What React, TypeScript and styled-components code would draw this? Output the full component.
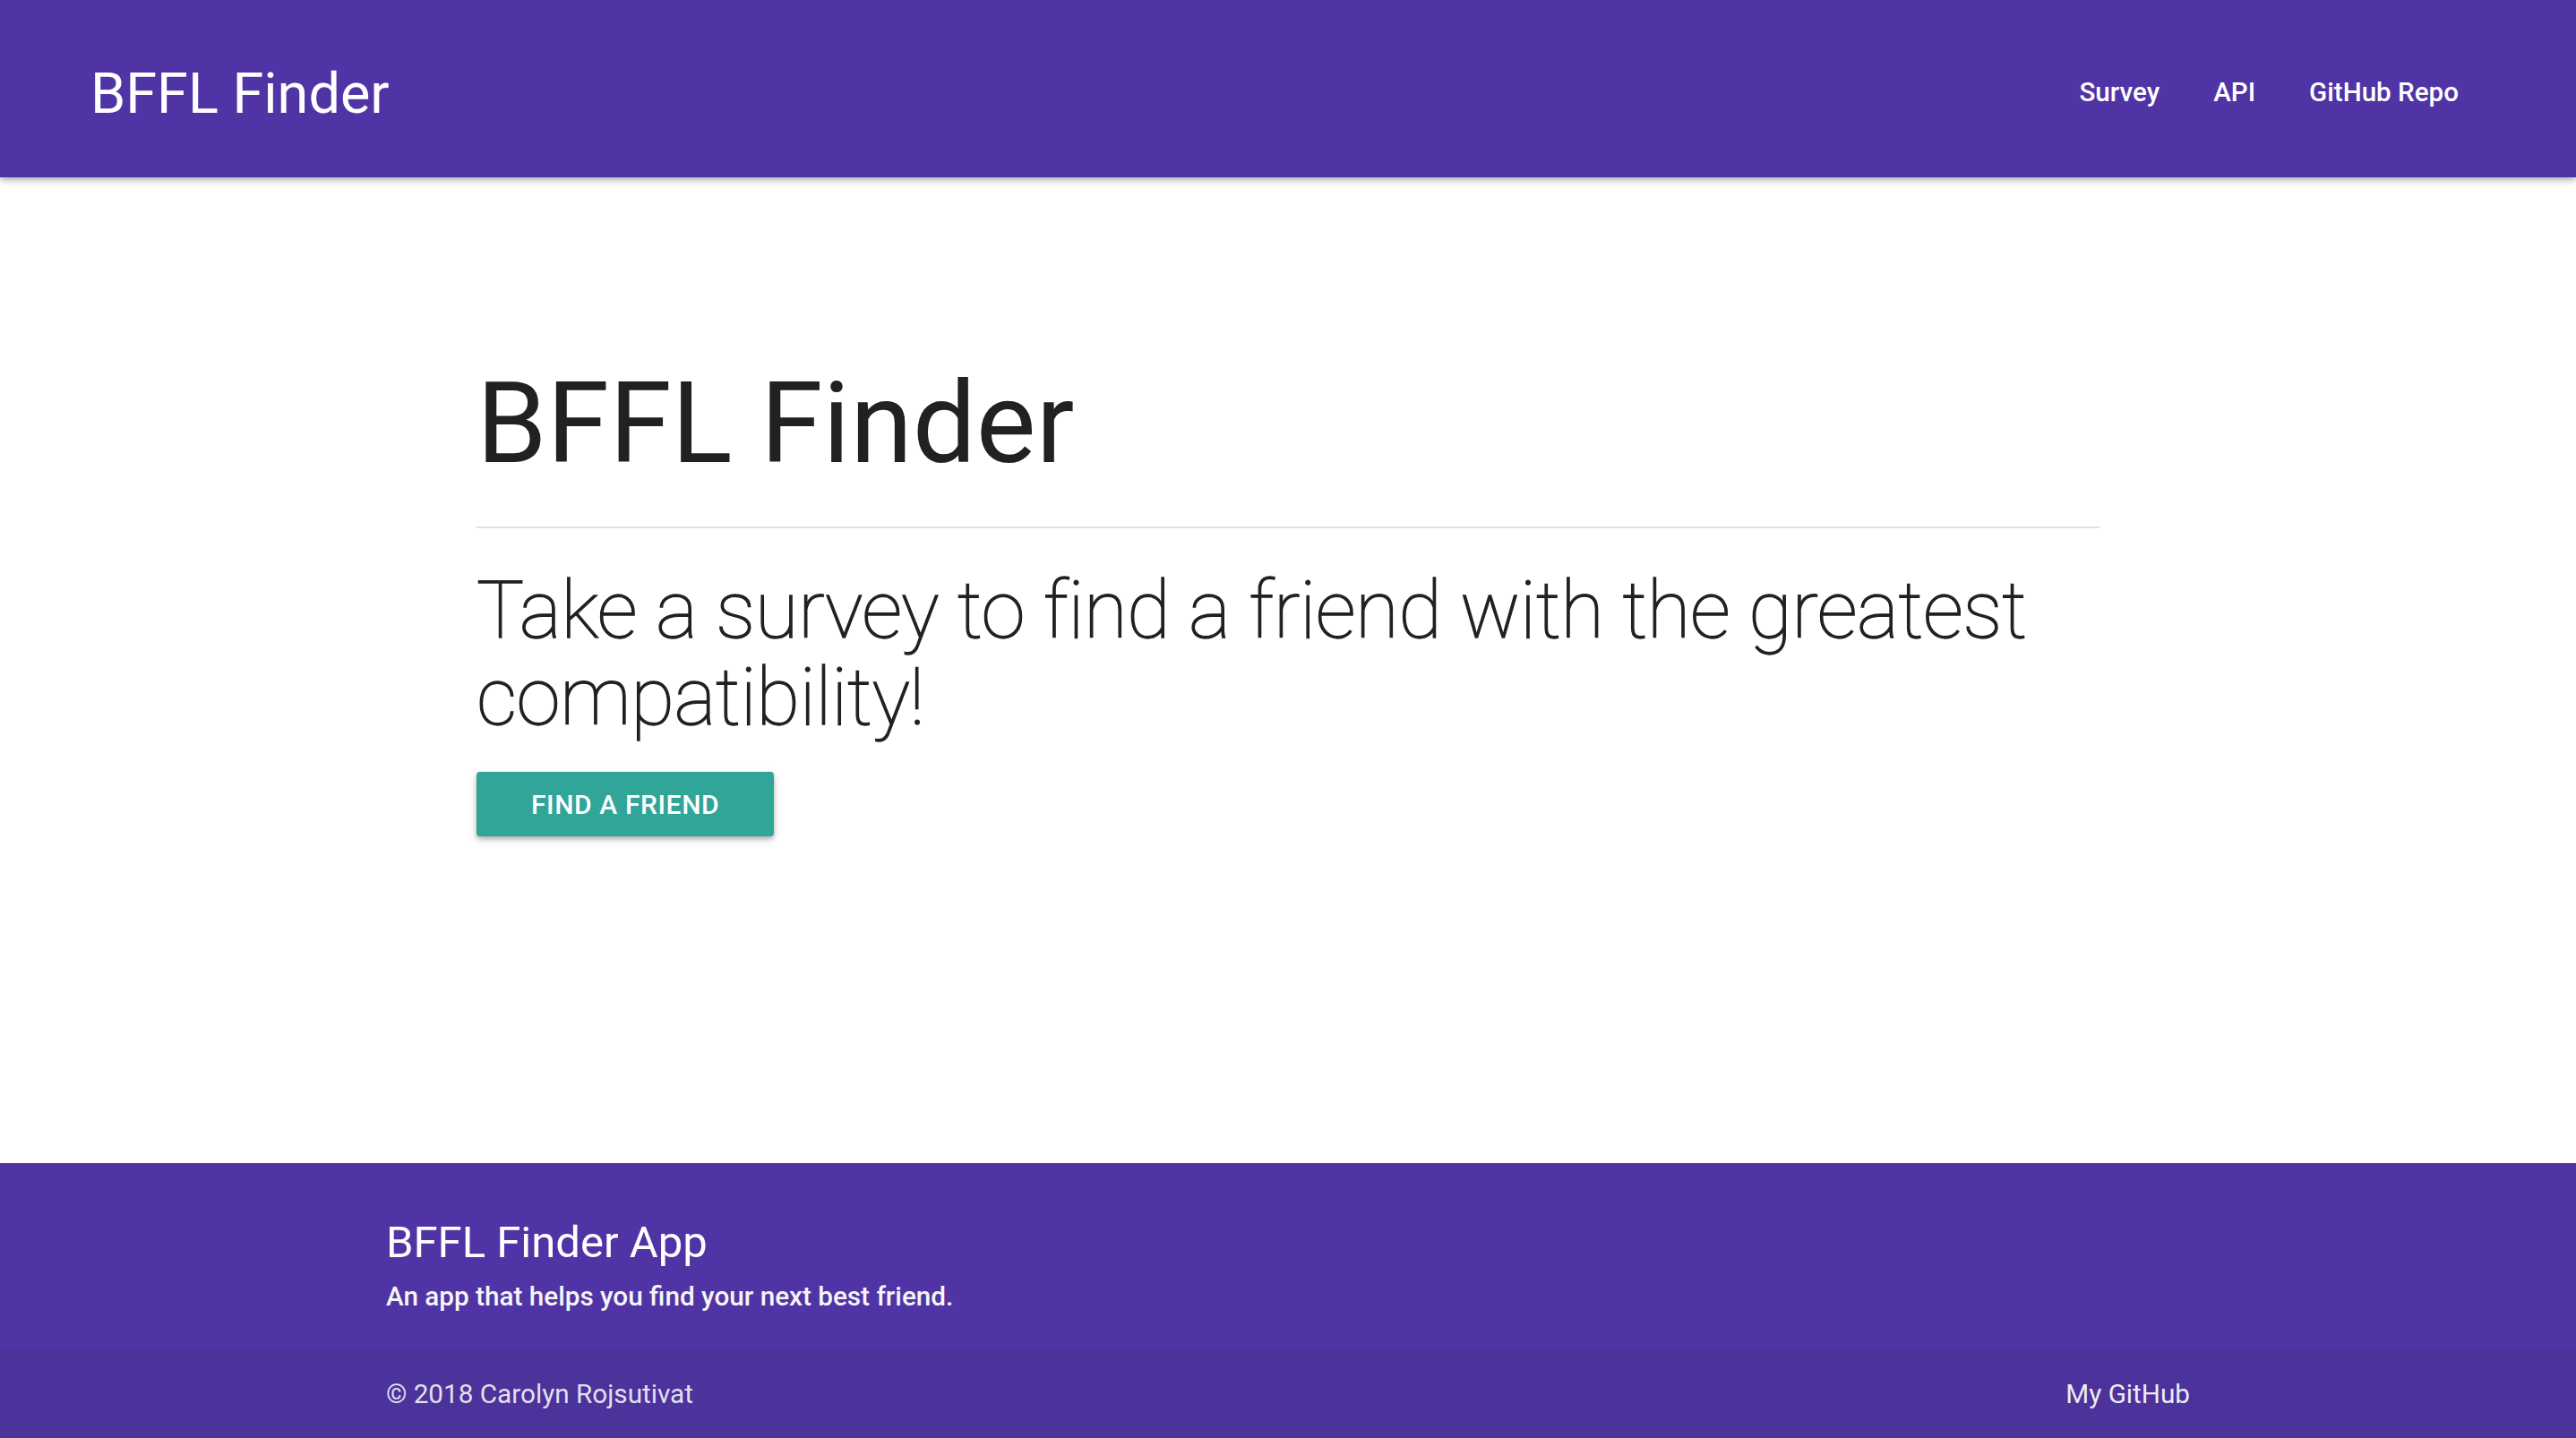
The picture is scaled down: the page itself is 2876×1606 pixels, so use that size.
import React from "react";
import styled, { createGlobalStyle } from "styled-components";

const GlobalStyle = createGlobalStyle`
  html, body {
    margin: 0;
    padding: 0;
    background: #ffffff;
  }
  body {
    font-family: Roboto, "Liberation Sans", Arial, sans-serif;
    color: rgba(0, 0, 0, 0.87);
  }
  * { box-sizing: border-box; }
`;

const Page = styled.div`
  min-height: 100vh;
  display: flex;
  flex-direction: column;
`;

const NavBar = styled.nav`
  height: 198px;
  background: #5034a5;
  box-shadow: 0 4px 8px rgba(0, 0, 0, 0.22), 0 2px 4px rgba(0, 0, 0, 0.14);
  display: flex;
  align-items: center;
  justify-content: space-between;
  padding: 10px 101px 0;
  position: relative;
  z-index: 2;
`;

const Brand = styled.a`
  color: #ffffff;
  font-size: 63px;
  font-weight: 400;
  text-decoration: none;
  line-height: 1;
`;

const NavList = styled.ul`
  list-style: none;
  margin: 0;
  padding: 0;
  display: flex;
  align-items: center;
`;

const NavItem = styled.li`
  display: block;
`;

const NavLink = styled.a`
  display: block;
  color: #ffffff;
  font-size: 29.6px;
  font-weight: 500;
  padding: 0 30px;
  text-decoration: none;
  line-height: 1.2;
`;

const Main = styled.main`
  flex: 1;
  display: flex;
  justify-content: center;
`;

const Jumbotron = styled.section`
  width: 1812px;
  padding-top: 206px;
  display: flex;
  flex-direction: column;
  align-items: flex-start;
`;

const Title = styled.h1`
  margin: 0;
  font-size: 126px;
  font-weight: 400;
  line-height: 1.1;
  color: #212121;
`;

const Divider = styled.hr`
  align-self: stretch;
  border: none;
  height: 2px;
  background: #e0e0e0;
  margin: 45px 0 43px;
`;

const Lead = styled.p`
  margin: 0;
  font-size: 89px;
  font-weight: 100;
  line-height: 1.1;
  letter-spacing: -0.55px;
  color: #212121;
  -webkit-text-stroke: 1.3px #212121;
`;

const ActionButton = styled.a`
  margin-top: 34px;
  height: 72px;
  padding: 0 61px;
  display: inline-flex;
  align-items: center;
  background: #30a598;
  color: #ffffff;
  font-size: 30px;
  font-weight: 500;
  letter-spacing: 0.6px;
  text-transform: uppercase;
  text-decoration: none;
  border-radius: 4px;
  box-shadow: 0 4px 10px rgba(0, 0, 0, 0.16), 0 3px 4px rgba(0, 0, 0, 0.2);
`;

const Footer = styled.footer`
  background: #5034a5;
  color: #ffffff;
`;

const FooterContainer = styled.div`
  width: 2014px;
  margin: 0 auto;
`;

const FooterTop = styled(FooterContainer)`
  padding: 62px 0 36px;
`;

const FooterTitle = styled.h5`
  margin: 0 0 12px;
  font-size: 49px;
  font-weight: 400;
  line-height: 1.1;
  color: #ffffff;
`;

const FooterText = styled.p`
  margin: 0;
  font-size: 29.7px;
  font-weight: 500;
  line-height: 1.5;
  color: #f5f5f5;
`;

const CopyrightBar = styled.div`
  background: #4c339b;
  height: 99px;
`;

const CopyrightRow = styled(FooterContainer)`
  height: 100%;
  display: flex;
  align-items: center;
  justify-content: space-between;
  font-size: 29.7px;
  font-weight: 400;
  color: rgba(255, 255, 255, 0.85);
`;

const FooterLink = styled.a`
  color: rgba(255, 255, 255, 0.92);
  text-decoration: none;
  white-space: nowrap;
`;

export default function App() {
  return (
    <Page>
      <GlobalStyle />
      <NavBar>
        <Brand href="#">BFFL Finder</Brand>
        <NavList>
          <NavItem>
            <NavLink href="#">Survey</NavLink>
          </NavItem>
          <NavItem>
            <NavLink href="#">API</NavLink>
          </NavItem>
          <NavItem>
            <NavLink href="#">GitHub Repo</NavLink>
          </NavItem>
        </NavList>
      </NavBar>
      <Main>
        <Jumbotron>
          <Title>BFFL Finder</Title>
          <Divider />
          <Lead>Take a survey to find a friend with the greatest compatibility!</Lead>
          <ActionButton href="#">Find a Friend</ActionButton>
        </Jumbotron>
      </Main>
      <Footer>
        <FooterTop>
          <FooterTitle>BFFL Finder App</FooterTitle>
          <FooterText>An app that helps you find your next best friend.</FooterText>
        </FooterTop>
        <CopyrightBar>
          <CopyrightRow>
            <span>© 2018 Carolyn Rojsutivat</span>
            <FooterLink href="#">My GitHub</FooterLink>
          </CopyrightRow>
        </CopyrightBar>
      </Footer>
    </Page>
  );
}
